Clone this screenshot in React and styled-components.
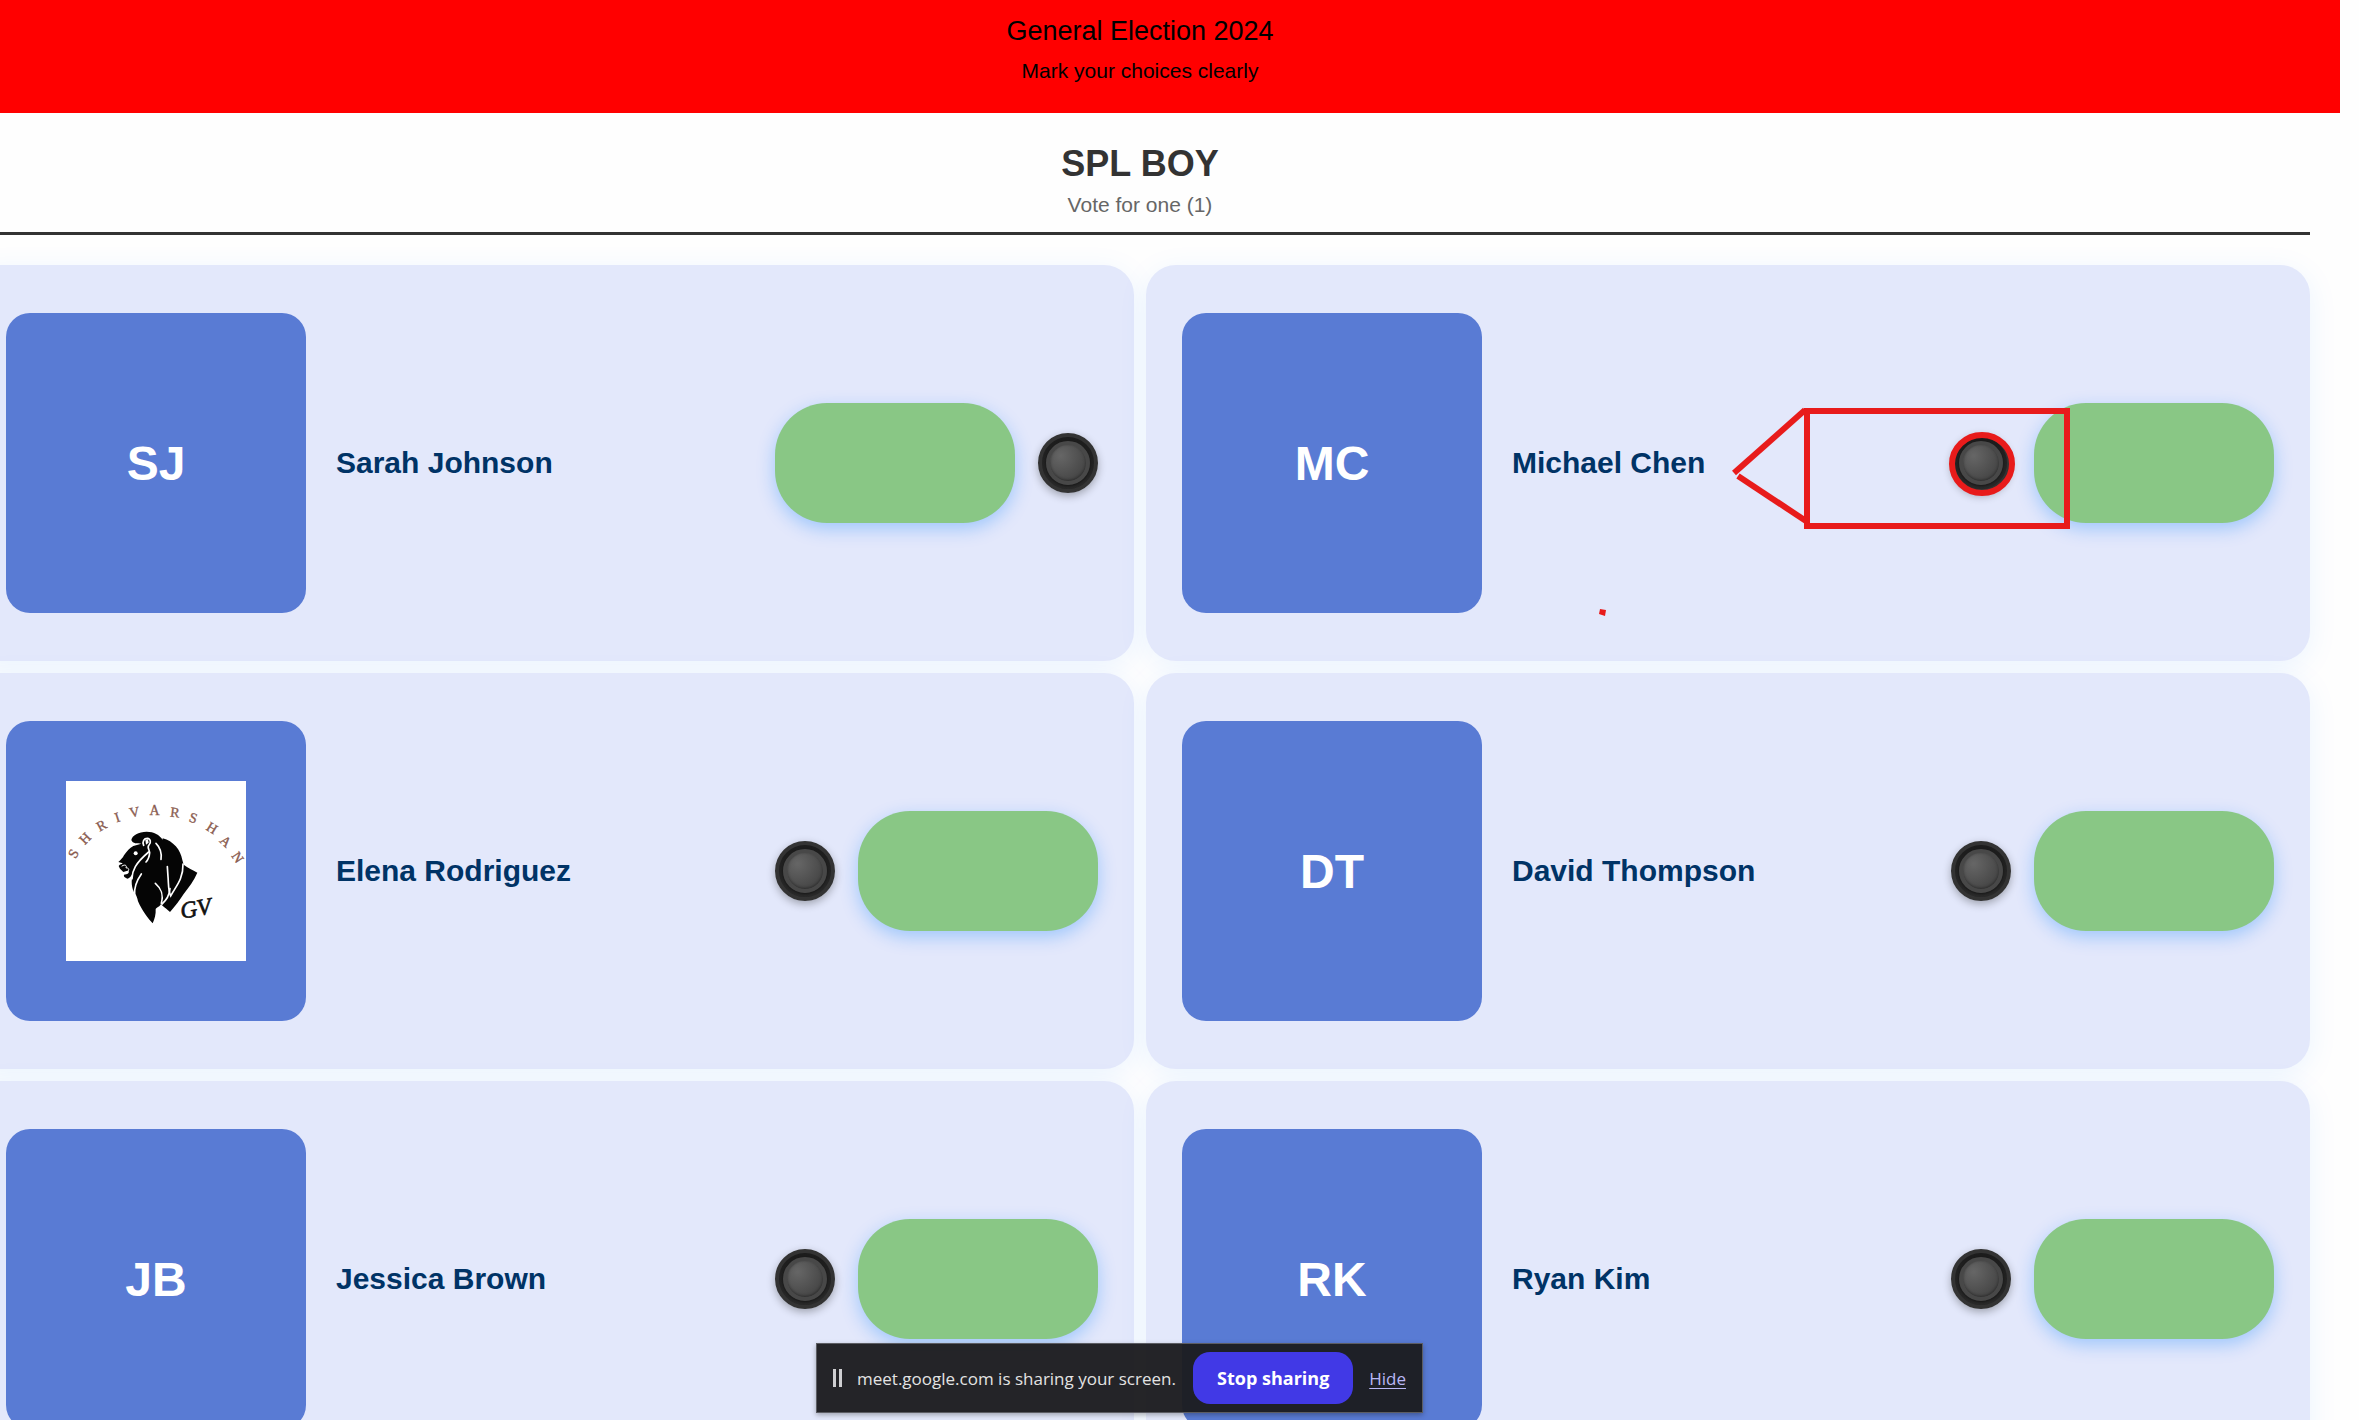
import React from "react";
import styled, { createGlobalStyle } from "styled-components";

const GlobalStyle = createGlobalStyle`
  *, *::before { box-sizing: border-box; }
  body {
    margin: 0;
    background: #fefefe;
    font-family: "Liberation Sans", Arial, sans-serif;
  }
  h1, h2, h3, p { margin: 0; }
`;

const Screen = styled.div`
  position: relative;
  height: 100vh;
  overflow: hidden;
`;

const Ballot = styled.main`
  margin: 0 19px 0 -60px;
`;

const Banner = styled.header`
  display: flex;
  flex-direction: column;
  gap: 4px;
  padding: 11px 0 26px;
  background: #ff0000;
  color: #000;
  text-align: center;
`;

const BannerTitle = styled.h1`
  font-size: 27px;
  line-height: 40px;
  font-weight: 400;
`;

const BannerNote = styled.p`
  font-size: 21px;
  line-height: 32px;
`;

const Contest = styled.section`
  display: flex;
  flex-direction: column;
  gap: 30px;
  padding: 30px;
`;

const ContestHeader = styled.div`
  display: flex;
  flex-direction: column;
  gap: 4px;
  padding-bottom: 11px;
  border-bottom: 3px solid #333;
  text-align: center;
`;

const ContestTitle = styled.h2`
  font-size: 36px;
  line-height: 42px;
  font-weight: 700;
  color: #333;
`;

const ContestRule = styled.p`
  font-size: 21px;
  line-height: 32px;
  color: #666;
`;

const Candidates = styled.div`
  display: grid;
  grid-template-columns: 1fr 1fr;
  gap: 12px;
`;

const Card = styled.article`
  position: relative;
  display: flex;
  align-items: center;
  gap: 30px;
  padding: 48px 36px;
  border-radius: 30px;
  background: #e3e8fb;
  box-shadow: 0 6px 30px rgba(0, 123, 255, 0.08);
`;

const Portrait = styled.div`
  display: flex;
  align-items: center;
  justify-content: center;
  flex: none;
  width: 300px;
  height: 300px;
  border-radius: 24px;
  background: #597bd4;
  color: #fff;
  font-size: 48px;
  font-weight: 700;
`;

const Name = styled.h3`
  flex: 1;
  font-size: 30px;
  font-weight: 700;
  color: #003366;
`;

const Controls = styled.div`
  display: flex;
  flex-direction: ${(p) => (p.$lampFirst ? "row-reverse" : "row")};
  align-items: center;
  gap: 23px;
`;

const Lamp = styled.span`
  width: 240px;
  height: 120px;
  border-radius: 52px;
  background: #89c785;
  box-shadow: 0 6px 18px rgba(0, 123, 255, 0.3);
`;

const VoteButton = styled.button`
  display: flex;
  align-items: center;
  justify-content: center;
  width: 60px;
  height: 60px;
  padding: 0;
  border: 4px solid #333;
  border-radius: 50%;
  background: linear-gradient(#1c1c1c, #2a2a2a);
  box-shadow: 0 3px 8px rgba(0, 0, 0, 0.3);
  cursor: pointer;

  &::before {
    content: "";
    width: 44px;
    height: 44px;
    border: 4px solid #484848;
    border-radius: 50%;
    background: radial-gradient(circle at 30% 30%, #666, #3c3c3c);
    box-shadow: inset 0 -1px 3px rgba(0, 0, 0, 0.4), 0 1px 3px rgba(0, 0, 0, 0.5);
  }
`;

const Markup = styled.svg`
  position: absolute;
  top: 0;
  right: 0;
  pointer-events: none;
`;

const ShareBar = styled.aside`
  position: absolute;
  left: 816px;
  bottom: 7px;
  display: flex;
  align-items: center;
  height: 70px;
  width: 607px;
  padding: 0 16px;
  border: 1px solid #5c5d63;
  background: rgba(28, 28, 31, 0.96);
  box-shadow: 0 2px 5px rgba(0, 0, 0, 0.3);
  font-family: "Open Sans", "Noto Sans", sans-serif;
  font-size: 17px;
  color: #e3e3e3;
`;

const PauseIcon = styled.svg`
  flex: none;
  margin-right: 14px;
`;

const ShareText = styled.span`
  flex: 1;
  white-space: nowrap;
`;

const StopButton = styled.button`
  width: 160px;
  height: 52px;
  margin-right: 16px;
  padding: 0;
  border: 0;
  border-radius: 17px;
  background: #4139e6;
  color: #fff;
  font: 700 18px "Open Sans", "Noto Sans", sans-serif;
  cursor: pointer;
`;

const HideLink = styled.a`
  color: #b9b7f5;
  text-underline-offset: 3px;
`;

const ARC = [
  ["S", 100, 281, -60],
  ["H", 135, 235, -45],
  ["R", 184, 196, -28],
  ["I", 232, 172, -18],
  ["V", 283, 156, -10],
  ["A", 344, 152, 0],
  ["R", 405, 157, 7],
  ["S", 460, 174, 17],
  ["H", 516, 204, 32],
  ["A", 557, 244, 42],
  ["N", 593, 292, 56],
];

function LionLogo() {
  return (
    <svg width="180" height="180" viewBox="78 63 540 540" role="img" aria-label="Shrivarshan GV">
      <rect x="78" y="63" width="540" height="540" fill="#fff" />
      <g
        fill="#8a5c50"
        fontFamily="'Liberation Serif', serif"
        fontSize="42"
        fontWeight="400"
        textAnchor="middle"
      >
        {ARC.map(([ch, x, y, r], i) => (
          <text key={i} transform={`translate(${x} ${y}) rotate(${r})`} y="14" stroke="#8a5c50">
            {ch}
          </text>
        ))}
      </g>
      <path
        fill="#050505"
        d="M274 240C276 226 296 216 320 215C342 215 358 224 368 239L368 235C400 243 422 270 427 300L431 314C444 324 458 330 472 338C462 362 446 382 431 402C420 420 404 440 390 456C382 448 374 444 366 436L363 432C358 442 352 440 347 447C348 462 344 478 338 490C326 478 306 452 294 424C292 414 290 408 286 402C274 388 272 360 280 340C274 342 274 354 262 356C254 352 250 350 252 344L262 342C268 338 268 332 262 332L250 336L240 326L236 318C240 312 246 314 248 310L235 306C242 300 248 294 252 286C262 272 268 264 280 258L304 251C292 250 278 252 274 240Z"
      />
      <g fill="none" stroke="#fff" strokeWidth="5" strokeLinecap="round">
        <path d="M311 256C306 244 312 235 322 235C332 236 334 248 327 255C320 262 328 268 329 278C328 290 326 298 318 306" />
        <path d="M326 276C312 288 296 302 286 320C278 334 276 344 276 356" />
        <path d="M348 250C358 260 366 276 363 298" />
        <path d="M429 312C430 350 414 372 400 394L392 408C384 390 386 372 384 350L382 320" />
        <path d="M304 342C290 362 282 380 284 404" />
        <path d="M346 370C362 384 372 400 364 430" />
        <path d="M390 386C388 406 380 420 366 432" />
        <path d="M246 318C254 312 262 316 258 324C266 322 270 330 262 336" strokeWidth="3" />
      </g>
      <path fill="#fff" d="M316 240L324 238L326 248L318 254Z" />
      <circle cx="287" cy="280" r="6" fill="#fff" />
      <text
        x="468"
        y="468"
        fill="#111"
        fontFamily="'Liberation Serif', serif"
        fontStyle="italic"
        fontWeight="400"
        fontSize="70"
        textAnchor="middle"
        stroke="#111"
        strokeWidth="2"
        transform="rotate(-10 470 450)"
      >
        GV
      </text>
    </svg>
  );
}

function PenMarks() {
  return (
    <Markup width="716" height="396" viewBox="1594 265 716 396" aria-hidden="true">
      <g fill="none" stroke="#e81b1b" strokeWidth="6">
        <rect x="1807" y="411" width="260" height="115" />
        <path d="M1805 410L1734 473" />
        <path d="M1738 476L1806 521" />
        <ellipse cx="1982" cy="464" rx="30" ry="29" />
      </g>
      <path d="M1600 609L1606 610L1605 616L1599 614Z" fill="#e81b1b" />
    </Markup>
  );
}

const CANDIDATES = [
  { name: "Sarah Johnson", initials: "SJ", lampFirst: true },
  { name: "Michael Chen", initials: "MC", marked: true },
  { name: "Elena Rodriguez", logo: true },
  { name: "David Thompson", initials: "DT" },
  { name: "Jessica Brown", initials: "JB" },
  { name: "Ryan Kim", initials: "RK" },
];

function Candidate({ name, initials, logo, lampFirst, marked }) {
  return (
    <Card>
      <Portrait>{logo ? <LionLogo /> : initials}</Portrait>
      <Name>{name}</Name>
      <Controls $lampFirst={lampFirst}>
        <VoteButton type="button" aria-label={`Vote for ${name}`} />
        <Lamp />
      </Controls>
      {marked && <PenMarks />}
    </Card>
  );
}

export default function App() {
  return (
    <Screen>
      <GlobalStyle />
      <Ballot>
        <Banner>
          <BannerTitle>General Election 2024</BannerTitle>
          <BannerNote>Mark your choices clearly</BannerNote>
        </Banner>
        <Contest>
          <ContestHeader>
            <ContestTitle>SPL BOY</ContestTitle>
            <ContestRule>Vote for one (1)</ContestRule>
          </ContestHeader>
          <Candidates>
            {CANDIDATES.map((c) => (
              <Candidate key={c.name} {...c} />
            ))}
          </Candidates>
        </Contest>
      </Ballot>
      <ShareBar>
        <PauseIcon width="10" height="18" viewBox="0 0 10 18" aria-hidden="true">
          <path d="M0 0h3v18H0zM6 0h3v18H6z" fill="#cfcfd2" />
        </PauseIcon>
        <ShareText>meet.google.com is sharing your screen.</ShareText>
        <StopButton type="button">Stop sharing</StopButton>
        <HideLink href="#hide">Hide</HideLink>
      </ShareBar>
    </Screen>
  );
}
